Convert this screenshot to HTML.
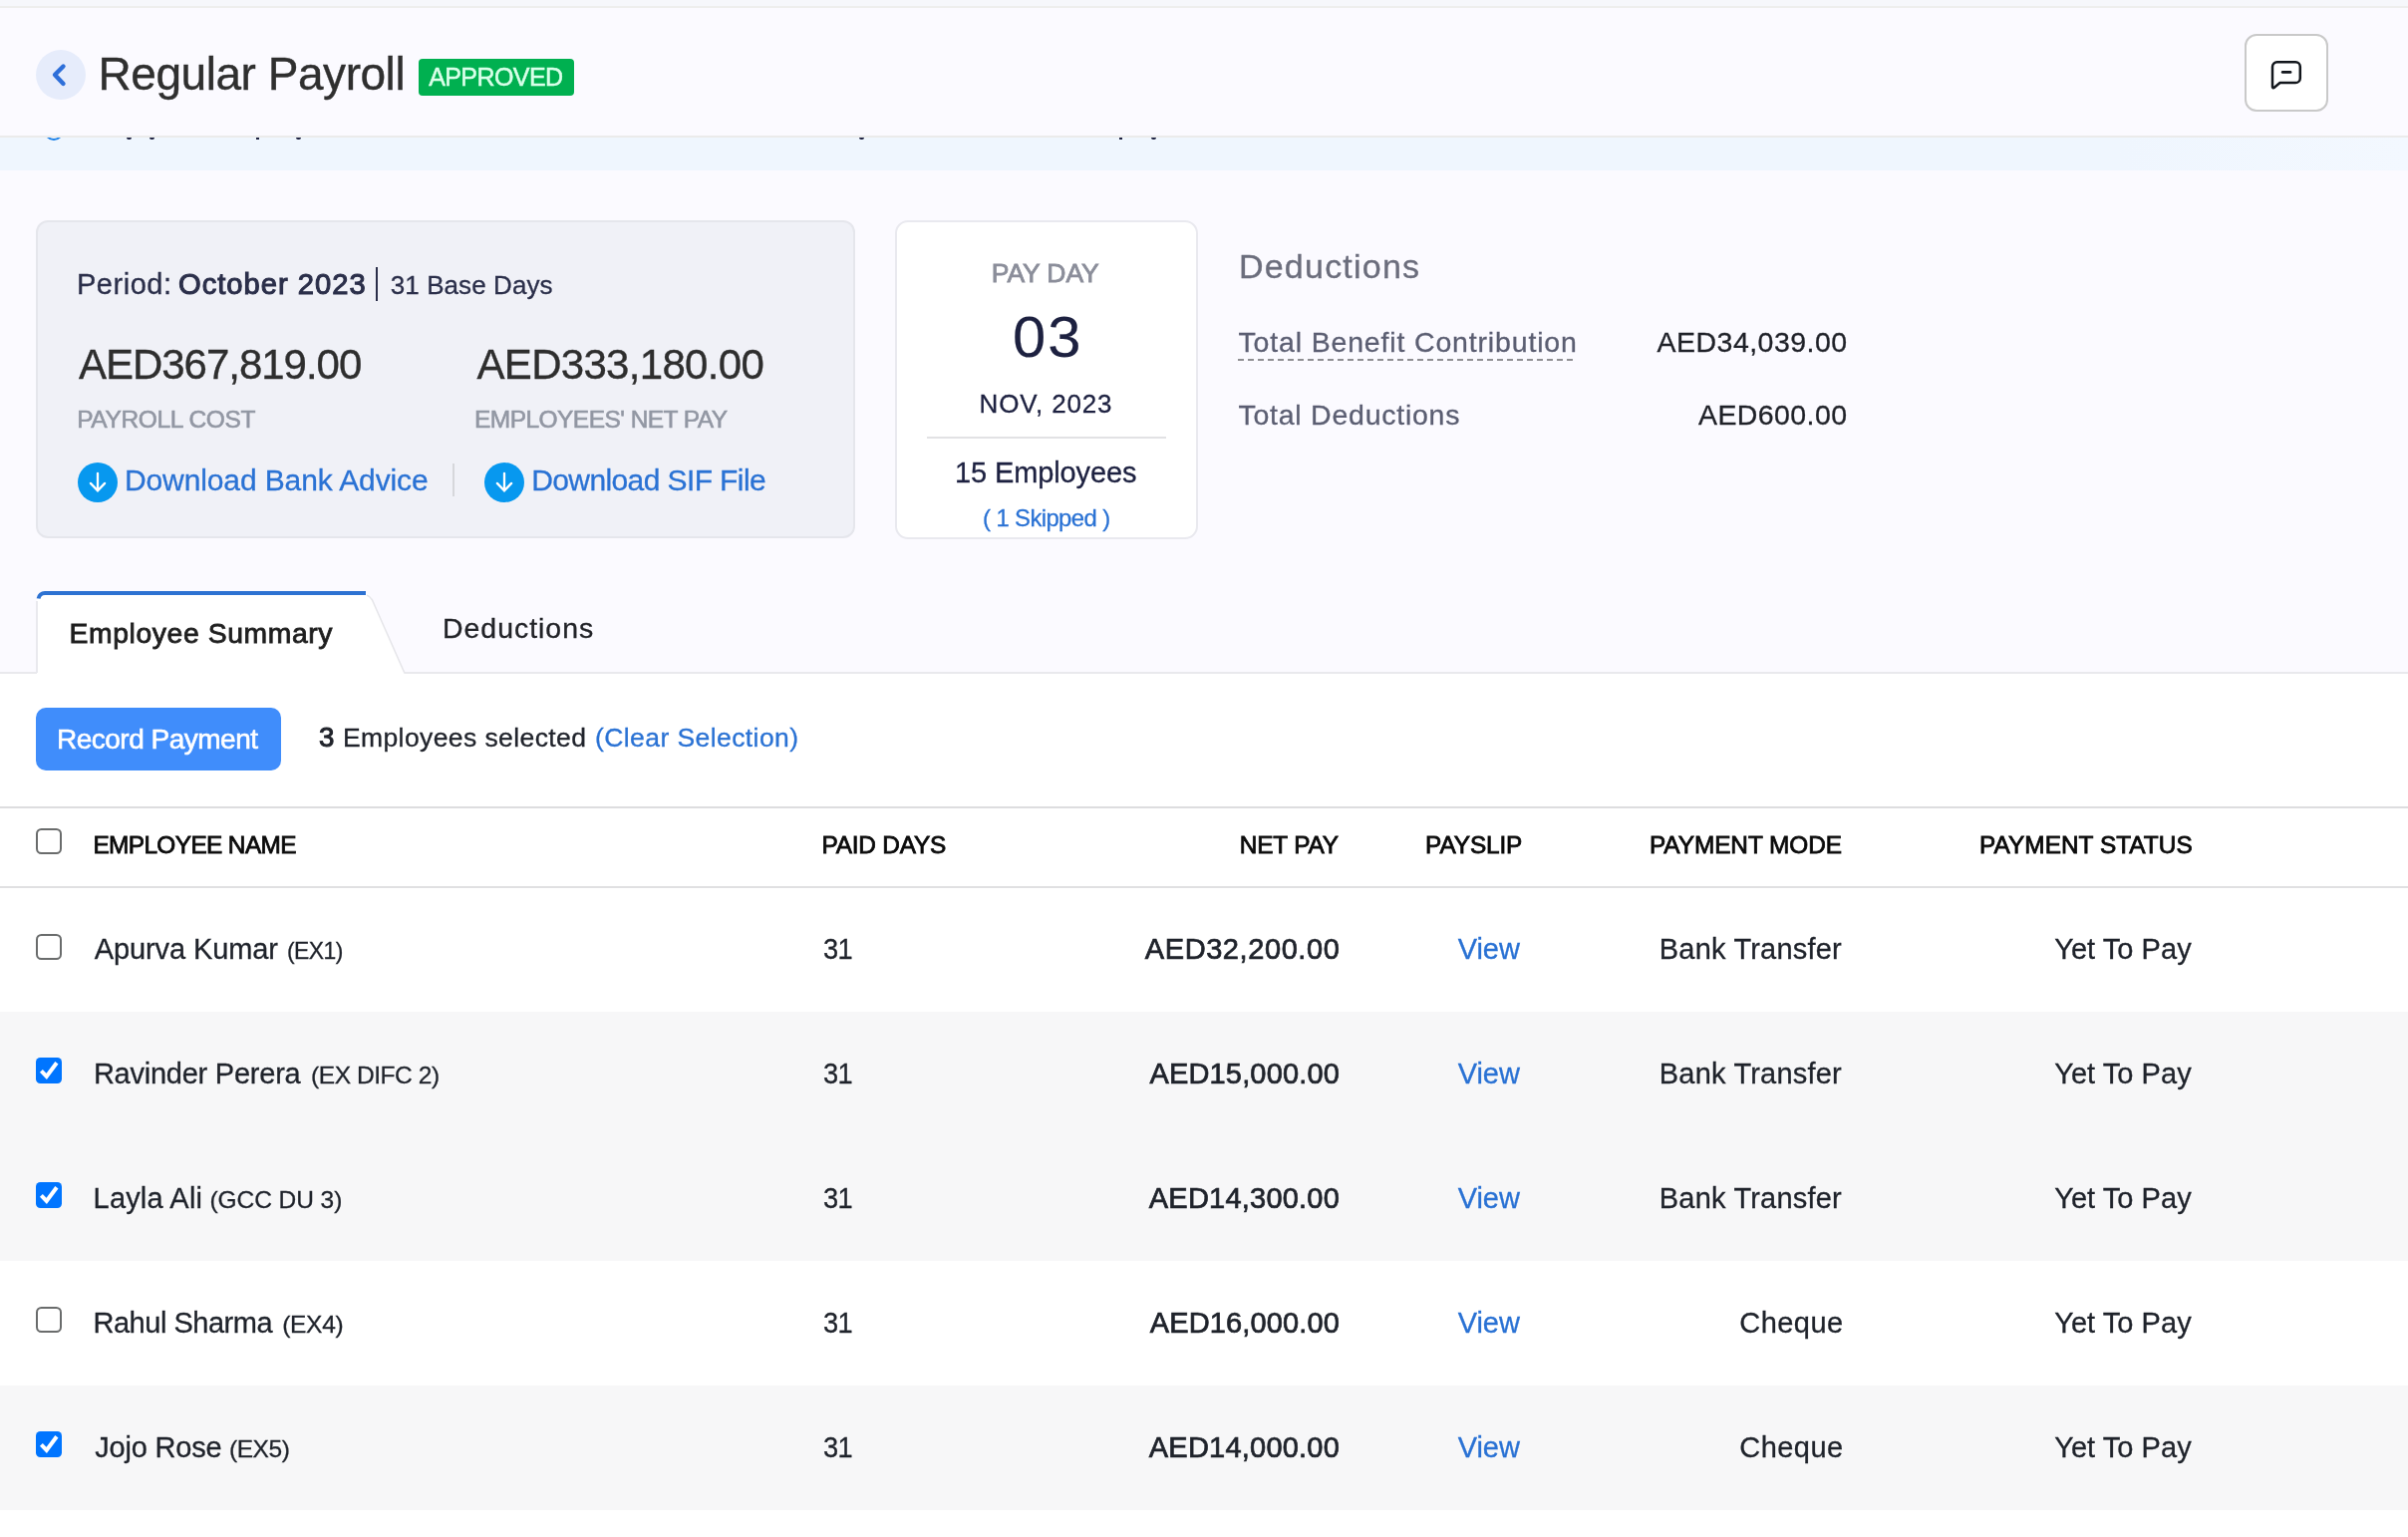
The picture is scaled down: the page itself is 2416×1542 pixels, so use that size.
<!DOCTYPE html>
<html><head><meta charset="utf-8"><title>Regular Payroll</title>
<style>
*{box-sizing:border-box;margin:0;padding:0}
html,body{width:2416px;height:1542px;overflow:hidden;background:#fbfaff;font-family:"Liberation Sans",sans-serif}
.abs,.t{position:absolute}
.t{white-space:nowrap;display:block}
</style></head>
<body>
<div id="root" style="position:absolute;left:0;top:0;width:2416px;height:1542px;will-change:transform">
<!-- top strip -->
<div class="abs" style="left:0;top:0;width:2416px;height:6px;background:#f6f7fb"></div>
<div class="abs" style="left:0;top:6px;width:2416px;height:2px;background:#eeeeed"></div>
<!-- header bottom border + banner -->
<div class="abs" style="left:0;top:136px;width:2416px;height:2px;background:#ebebeb"></div>
<div class="abs" style="left:0;top:138px;width:2416px;height:33px;background:linear-gradient(90deg,#eff6fe 0,#eff6fe 88%,#f3f8ff 100%)"></div>
<!-- banner clipped content -->
<div class="abs" style="left:0;top:138px;width:2416px;height:33px;overflow:hidden">
<div class="abs" style="left:44px;top:-17px;width:20px;height:20px;border-radius:50%;border:2.2px solid #1a7fe8"></div>
<div class="abs" style="left:127px;top:0;width:5px;height:2px;background:#1d2140;border-radius:0 0 2px 2px"></div>
<div class="abs" style="left:150px;top:0;width:5px;height:2px;background:#1d2140;border-radius:0 0 2px 2px"></div>
<div class="abs" style="left:257px;top:0;width:3px;height:2px;background:#1d2140"></div>
<div class="abs" style="left:297px;top:0;width:5px;height:2px;background:#1d2140;border-radius:0 0 2px 2px"></div>
<div class="abs" style="left:862px;top:0;width:5px;height:2px;background:#1d2140;border-radius:0 0 2px 2px"></div>
<div class="abs" style="left:1123px;top:0;width:3px;height:2px;background:#1d2140"></div>
<div class="abs" style="left:1155px;top:0;width:5px;height:2px;background:#1d2140;border-radius:0 0 2px 2px"></div>
</div>
<!-- back circle -->
<div class="abs" style="left:36px;top:50px;width:50px;height:50px;border-radius:50%;background:#e6ecfb"></div>
<svg class="abs" style="left:36px;top:50px" width="50" height="50" viewBox="0 0 50 50"><path d="M27.5 16.5 L19 25 L27.5 34" fill="none" stroke="#2e6fd9" stroke-width="4.4" stroke-linecap="round" stroke-linejoin="round"/></svg>
<!-- approved badge -->
<div class="abs" style="left:420px;top:59px;width:156px;height:37px;border-radius:4px;background:#00b050"></div>
<!-- comment button -->
<div class="abs" style="left:2252px;top:34px;width:84px;height:78px;border-radius:12px;background:#fff;border:2px solid #c9c9c9"></div>
<svg class="abs" style="left:2274px;top:56px" width="40" height="40" viewBox="0 0 40 40"><path d="M10.8 6.3 H29.2 a4.6 4.6 0 0 1 4.6 4.6 V22.4 a4.6 4.6 0 0 1 -4.6 4.6 H13.6 L7.6 32 a1 1 0 0 1 -1.6 -0.9 V10.9 a4.6 4.6 0 0 1 4.8 -4.6 Z" fill="none" stroke="#12161c" stroke-width="2.5" stroke-linejoin="round"/><path d="M16.2 16.4 H24" stroke="#12161c" stroke-width="2.8" stroke-linecap="round"/></svg>
<!-- summary card -->
<div class="abs" style="left:36px;top:221px;width:822px;height:319px;border-radius:12px;background:#f0f1f7;border:2px solid #e5e6ec"></div>
<div class="abs" style="left:376.8px;top:268px;width:2.6px;height:33.5px;background:#2b2f4a"></div>
<div class="abs" style="left:78px;top:464px;width:40px;height:40px;border-radius:50%;background:#0798ef"></div>
<svg class="abs" style="left:78px;top:464px" width="40" height="40" viewBox="0 0 40 40"><path d="M20 10.8 V28 M12.9 20.9 L20 28.3 L27.1 20.9" fill="none" stroke="#fff" stroke-width="2.3" stroke-linecap="round" stroke-linejoin="miter"/></svg>
<div class="abs" style="left:454px;top:465px;width:2px;height:33px;background:#d6d7db"></div>
<div class="abs" style="left:486px;top:464px;width:40px;height:40px;border-radius:50%;background:#0798ef"></div>
<svg class="abs" style="left:486px;top:464px" width="40" height="40" viewBox="0 0 40 40"><path d="M20 10.8 V28 M12.9 20.9 L20 28.3 L27.1 20.9" fill="none" stroke="#fff" stroke-width="2.3" stroke-linecap="round" stroke-linejoin="miter"/></svg>
<!-- pay day card -->
<div class="abs" style="left:898px;top:220.5px;width:304px;height:320px;border-radius:13px;background:#fff;border:2px solid #e9e9ef"></div>
<div class="abs" style="left:930px;top:438px;width:240px;height:2px;background:#e2e2e4"></div>
<!-- dashed underline -->
<svg class="abs" style="left:1242px;top:359px" width="340" height="4"><path d="M0 2 H340" stroke="#8f8f92" stroke-width="2" stroke-dasharray="6 4"/></svg>
<!-- tabs -->
<div class="abs" style="left:0;top:676px;width:2416px;height:866px;background:#fff"></div>
<div class="abs" style="left:0;top:674px;width:37px;height:2px;background:#e9e9ed"></div><div class="abs" style="left:405px;top:674px;width:2011px;height:2px;background:#e9e9ed"></div>
<svg class="abs" style="left:0;top:585px" width="460" height="95" viewBox="0 585 460 95">
  <path d="M37 676 V603 a8 8 0 0 1 8 -8 H366 q4.5 0 7 5.5 L405.5 676 Z" fill="#fff"/>
  <path d="M37 675 V603" fill="none" stroke="#e9e9ee" stroke-width="2"/>
  <path d="M368 597 q3.5 1.5 5.5 5 L405.8 675" fill="none" stroke="#e6e6ea" stroke-width="1.6"/>
  <path d="M38.6 600.5 a6.5 6.5 0 0 1 6.4 -5.5 H367" fill="none" stroke="#2d72d2" stroke-width="4"/>
</svg>
<!-- record payment -->
<div class="abs" style="left:36px;top:710px;width:246px;height:63px;border-radius:10px;background:#408dfb"></div>
<!-- table lines -->
<div class="abs" style="left:0;top:809px;width:2416px;height:2px;background:#dddddf"></div>
<div class="abs" style="left:0;top:889px;width:2416px;height:2px;background:#e0e0e2"></div>
<!-- selected rows -->
<div class="abs" style="left:0;top:1015px;width:2416px;height:250px;background:#f7f7f8"></div>
<div class="abs" style="left:0;top:1390px;width:2416px;height:125px;background:#f7f7f8"></div>
<!-- checkboxes -->
<div class="abs cb" style="left:36px;top:831px"></div>
<div class="abs cb" style="left:36px;top:937px"></div>
<div class="abs cb on" style="left:36px;top:1061px"><svg width="26" height="26" viewBox="0 0 26 26" style="display:block"><path d="M5.4 13.4 L10.7 18.9 L20.9 5.3" fill="none" stroke="#fff" stroke-width="4"/></svg></div>
<div class="abs cb on" style="left:36px;top:1186px"><svg width="26" height="26" viewBox="0 0 26 26" style="display:block"><path d="M5.4 13.4 L10.7 18.9 L20.9 5.3" fill="none" stroke="#fff" stroke-width="4"/></svg></div>
<div class="abs cb" style="left:36px;top:1311px"></div>
<div class="abs cb on" style="left:36px;top:1436px"><svg width="26" height="26" viewBox="0 0 26 26" style="display:block"><path d="M5.4 13.4 L10.7 18.9 L20.9 5.3" fill="none" stroke="#fff" stroke-width="4"/></svg></div>
<style>
.cb{width:26px;height:26px;border:2px solid #6a6c6c;border-radius:5.5px;background:#fff}
.cb.on{border:0;background:#0075ff;border-radius:4.5px}
</style>
<span class="t" style="left:98.50px;top:51.06px;font-size:46px;line-height:46px;font-weight:400;color:#2f2f2f;letter-spacing:-0.455px;-webkit-text-stroke:0.35px #2f2f2f">Regular Payroll</span>
<span class="t" style="left:430.20px;top:64.64px;font-size:25px;line-height:25px;font-weight:400;color:#d9ffe9;letter-spacing:-0.583px;-webkit-text-stroke:0.5px #d9ffe9">APPROVED</span>
<span class="t" style="left:77.00px;top:270.65px;font-size:29px;line-height:29px;font-weight:400;color:#2b2f4a;letter-spacing:0.528px;-webkit-text-stroke:0.3px #2b2f4a">Period:</span>
<span class="t" style="left:178.50px;top:270.65px;font-size:29px;line-height:29px;font-weight:400;color:#2b2f4a;letter-spacing:1.015px;-webkit-text-stroke:1.05px #2b2f4a;transform-origin:1.00px 0;transform:scaleX(1.0045)">October 2023</span>
<span class="t" style="left:391.80px;top:273.19px;font-size:26px;line-height:26px;font-weight:400;color:#2b2f4a;letter-spacing:0.075px;-webkit-text-stroke:0.3px #2b2f4a">31 Base Days</span>
<span class="t" style="left:79.00px;top:345.05px;font-size:42px;line-height:42px;font-weight:400;color:#2e2e2e;letter-spacing:-1.027px;-webkit-text-stroke:0.35px #2e2e2e">AED367,819.00</span>
<span class="t" style="left:478.50px;top:345.05px;font-size:42px;line-height:42px;font-weight:400;color:#2e2e2e;letter-spacing:-0.693px;-webkit-text-stroke:0.35px #2e2e2e">AED333,180.00</span>
<span class="t" style="left:77.20px;top:408.66px;font-size:24.5px;line-height:24.5px;font-weight:400;color:#9297a3;letter-spacing:-0.371px;-webkit-text-stroke:0.6px #9297a3">PAYROLL COST</span>
<span class="t" style="left:476.00px;top:408.66px;font-size:24.5px;line-height:24.5px;font-weight:400;color:#9297a3;letter-spacing:-0.543px;-webkit-text-stroke:0.6px #9297a3">EMPLOYEES&#x27; NET PAY</span>
<span class="t" style="left:125.00px;top:466.61px;font-size:30px;line-height:30px;font-weight:400;color:#2a72d4;letter-spacing:-0.114px;-webkit-text-stroke:0.3px #2a72d4">Download Bank Advice</span>
<span class="t" style="left:533.20px;top:466.61px;font-size:30px;line-height:30px;font-weight:400;color:#2a72d4;letter-spacing:-0.602px;-webkit-text-stroke:0.3px #2a72d4">Download SIF File</span>
<span class="t" style="left:994.80px;top:260.57px;font-size:26.5px;line-height:26.5px;font-weight:400;color:#8b8e9a;letter-spacing:-0.104px;-webkit-text-stroke:0.8px #8b8e9a">PAY DAY</span>
<span class="t" style="left:1015.60px;top:309.20px;font-size:58px;line-height:58px;font-weight:400;color:#1d2140;letter-spacing:2.030px;-webkit-text-stroke:0.15px #1d2140;transform-origin:2.00px 0;transform:scaleX(1.0307)">03</span>
<span class="t" style="left:982.60px;top:391.99px;font-size:26px;line-height:26px;font-weight:400;color:#1d2140;letter-spacing:0.826px;-webkit-text-stroke:0.3px #1d2140">NOV, 2023</span>
<span class="t" style="left:958.00px;top:459.75px;font-size:29px;line-height:29px;font-weight:400;color:#1d2140;letter-spacing:-0.116px;-webkit-text-stroke:0.3px #1d2140">15 Employees</span>
<span class="t" style="left:986.30px;top:508.28px;font-size:24px;line-height:24px;font-weight:400;color:#2a72d4;letter-spacing:-0.600px;-webkit-text-stroke:0.3px #2a72d4;transform-origin:1.00px 0;transform:scaleX(0.9938)">( 1 Skipped )</span>
<span class="t" style="left:1242.60px;top:250.77px;font-size:33px;line-height:33px;font-weight:400;color:#6b6d7c;letter-spacing:1.155px;-webkit-text-stroke:0.3px #6b6d7c;transform-origin:2.00px 0;transform:scaleX(1.0323)">Deductions</span>
<span class="t" style="left:1242.50px;top:328.87px;font-size:28.5px;line-height:28.5px;font-weight:400;color:#5b5e72;letter-spacing:0.836px;-webkit-text-stroke:0.3px #5b5e72">Total Benefit Contribution</span>
<span class="t" style="left:1662.60px;top:328.87px;font-size:28.5px;line-height:28.5px;font-weight:400;color:#1f2128;letter-spacing:0.460px;-webkit-text-stroke:0.3px #1f2128">AED34,039.00</span>
<span class="t" style="left:1242.50px;top:401.87px;font-size:28.5px;line-height:28.5px;font-weight:400;color:#5b5e72;letter-spacing:0.750px;-webkit-text-stroke:0.3px #5b5e72">Total Deductions</span>
<span class="t" style="left:1704.00px;top:401.87px;font-size:28.5px;line-height:28.5px;font-weight:400;color:#1f2128;letter-spacing:0.409px;-webkit-text-stroke:0.3px #1f2128">AED600.00</span>
<span class="t" style="left:69.50px;top:620.84px;font-size:28.3px;line-height:28.3px;font-weight:400;color:#1f1f1f;letter-spacing:0.612px;-webkit-text-stroke:0.85px #1f1f1f">Employee Summary</span>
<span class="t" style="left:444.30px;top:617.10px;font-size:28px;line-height:28px;font-weight:400;color:#222328;letter-spacing:0.980px;-webkit-text-stroke:0.3px #222328;transform-origin:2.00px 0;transform:scaleX(1.0157)">Deductions</span>
<span class="t" style="left:57.00px;top:727.80px;font-size:28px;line-height:28px;font-weight:400;color:#ffffff;letter-spacing:-0.505px;-webkit-text-stroke:0.6px #ffffff">Record Payment</span>
<span class="t" style="left:320.00px;top:725.92px;font-size:27.5px;line-height:27.5px;font-weight:400;color:#21242c;letter-spacing:0.097px;-webkit-text-stroke:1.0px #21242c;transform-origin:1.00px 0;transform:scaleX(1.0069)">3</span>
<span class="t" style="left:343.90px;top:726.57px;font-size:26.5px;line-height:26.5px;font-weight:400;color:#21242c;letter-spacing:0.405px;-webkit-text-stroke:0.3px #21242c">Employees selected</span>
<span class="t" style="left:597.00px;top:726.57px;font-size:26.5px;line-height:26.5px;font-weight:400;color:#2a72d4;letter-spacing:0.417px;-webkit-text-stroke:0.3px #2a72d4">(Clear Selection)</span>
<span class="t" style="left:93.40px;top:836.35px;font-size:24.4px;line-height:24.4px;font-weight:400;color:#0a0a0a;letter-spacing:-0.610px;-webkit-text-stroke:0.8px #0a0a0a">EMPLOYEE NAME</span>
<span class="t" style="left:824.40px;top:836.35px;font-size:24.4px;line-height:24.4px;font-weight:400;color:#0a0a0a;letter-spacing:-0.206px;-webkit-text-stroke:0.8px #0a0a0a">PAID DAYS</span>
<span class="t" style="left:1243.70px;top:836.35px;font-size:24.4px;line-height:24.4px;font-weight:400;color:#0a0a0a;letter-spacing:-0.141px;-webkit-text-stroke:0.8px #0a0a0a">NET PAY</span>
<span class="t" style="left:1430.10px;top:836.35px;font-size:24.4px;line-height:24.4px;font-weight:400;color:#0a0a0a;letter-spacing:-0.132px;-webkit-text-stroke:0.8px #0a0a0a">PAYSLIP</span>
<span class="t" style="left:1654.90px;top:836.35px;font-size:24.4px;line-height:24.4px;font-weight:400;color:#0a0a0a;letter-spacing:-0.066px;-webkit-text-stroke:0.8px #0a0a0a">PAYMENT MODE</span>
<span class="t" style="left:1986.00px;top:836.35px;font-size:24.4px;line-height:24.4px;font-weight:400;color:#0a0a0a;letter-spacing:0.035px;-webkit-text-stroke:0.8px #0a0a0a">PAYMENT STATUS</span>
<span class="t" style="left:94.70px;top:938.05px;font-size:29px;line-height:29px;font-weight:400;color:#1f232b;letter-spacing:-0.100px;-webkit-text-stroke:0.3px #1f232b">Apurva Kumar</span>
<span class="t" style="left:288.30px;top:941.86px;font-size:24.5px;line-height:24.5px;font-weight:400;color:#1f232b;letter-spacing:-0.613px;-webkit-text-stroke:0.3px #1f232b;transform-origin:1.00px 0;transform:scaleX(0.9340)">(EX1)</span>
<span class="t" style="left:826.30px;top:938.05px;font-size:29px;line-height:29px;font-weight:400;color:#1f232b;letter-spacing:-0.725px;-webkit-text-stroke:0.3px #1f232b;transform-origin:1.00px 0;transform:scaleX(0.9384)">31</span>
<span class="t" style="left:1148.80px;top:938.05px;font-size:29px;line-height:29px;font-weight:400;color:#1f232b;letter-spacing:0.579px;-webkit-text-stroke:0.72px #1f232b">AED32,200.00</span>
<span class="t" style="left:1462.80px;top:938.05px;font-size:29px;line-height:29px;font-weight:400;color:#2a72d4;letter-spacing:-0.100px;-webkit-text-stroke:0.3px #2a72d4">View</span>
<span class="t" style="left:1664.80px;top:938.05px;font-size:29px;line-height:29px;font-weight:400;color:#1f232b;letter-spacing:0.194px;-webkit-text-stroke:0.3px #1f232b">Bank Transfer</span>
<span class="t" style="left:2061.20px;top:938.05px;font-size:29px;line-height:29px;font-weight:400;color:#1f232b;letter-spacing:0.049px;-webkit-text-stroke:0.3px #1f232b">Yet To Pay</span>
<span class="t" style="left:93.90px;top:1063.05px;font-size:29px;line-height:29px;font-weight:400;color:#1f232b;letter-spacing:-0.238px;-webkit-text-stroke:0.3px #1f232b">Ravinder Perera</span>
<span class="t" style="left:312.10px;top:1066.86px;font-size:24.5px;line-height:24.5px;font-weight:400;color:#1f232b;letter-spacing:-0.445px;-webkit-text-stroke:0.3px #1f232b">(EX DIFC 2)</span>
<span class="t" style="left:826.30px;top:1063.05px;font-size:29px;line-height:29px;font-weight:400;color:#1f232b;letter-spacing:-0.725px;-webkit-text-stroke:0.3px #1f232b;transform-origin:1.00px 0;transform:scaleX(0.9384)">31</span>
<span class="t" style="left:1153.50px;top:1063.05px;font-size:29px;line-height:29px;font-weight:400;color:#1f232b;letter-spacing:0.152px;-webkit-text-stroke:0.72px #1f232b">AED15,000.00</span>
<span class="t" style="left:1462.80px;top:1063.05px;font-size:29px;line-height:29px;font-weight:400;color:#2a72d4;letter-spacing:-0.100px;-webkit-text-stroke:0.3px #2a72d4">View</span>
<span class="t" style="left:1664.80px;top:1063.05px;font-size:29px;line-height:29px;font-weight:400;color:#1f232b;letter-spacing:0.194px;-webkit-text-stroke:0.3px #1f232b">Bank Transfer</span>
<span class="t" style="left:2061.20px;top:1063.05px;font-size:29px;line-height:29px;font-weight:400;color:#1f232b;letter-spacing:0.049px;-webkit-text-stroke:0.3px #1f232b">Yet To Pay</span>
<span class="t" style="left:93.60px;top:1188.05px;font-size:29px;line-height:29px;font-weight:400;color:#1f232b;letter-spacing:0.166px;-webkit-text-stroke:0.3px #1f232b">Layla Ali</span>
<span class="t" style="left:210.40px;top:1191.86px;font-size:24.5px;line-height:24.5px;font-weight:400;color:#1f232b;letter-spacing:-0.048px;-webkit-text-stroke:0.3px #1f232b">(GCC DU 3)</span>
<span class="t" style="left:826.30px;top:1188.05px;font-size:29px;line-height:29px;font-weight:400;color:#1f232b;letter-spacing:-0.725px;-webkit-text-stroke:0.3px #1f232b;transform-origin:1.00px 0;transform:scaleX(0.9384)">31</span>
<span class="t" style="left:1152.80px;top:1188.05px;font-size:29px;line-height:29px;font-weight:400;color:#1f232b;letter-spacing:0.216px;-webkit-text-stroke:0.72px #1f232b">AED14,300.00</span>
<span class="t" style="left:1462.80px;top:1188.05px;font-size:29px;line-height:29px;font-weight:400;color:#2a72d4;letter-spacing:-0.100px;-webkit-text-stroke:0.3px #2a72d4">View</span>
<span class="t" style="left:1664.80px;top:1188.05px;font-size:29px;line-height:29px;font-weight:400;color:#1f232b;letter-spacing:0.194px;-webkit-text-stroke:0.3px #1f232b">Bank Transfer</span>
<span class="t" style="left:2061.20px;top:1188.05px;font-size:29px;line-height:29px;font-weight:400;color:#1f232b;letter-spacing:0.049px;-webkit-text-stroke:0.3px #1f232b">Yet To Pay</span>
<span class="t" style="left:93.50px;top:1313.05px;font-size:29px;line-height:29px;font-weight:400;color:#1f232b;letter-spacing:-0.486px;-webkit-text-stroke:0.3px #1f232b">Rahul Sharma</span>
<span class="t" style="left:283.20px;top:1316.86px;font-size:24.5px;line-height:24.5px;font-weight:400;color:#1f232b;letter-spacing:-0.295px;-webkit-text-stroke:0.3px #1f232b">(EX4)</span>
<span class="t" style="left:826.30px;top:1313.05px;font-size:29px;line-height:29px;font-weight:400;color:#1f232b;letter-spacing:-0.725px;-webkit-text-stroke:0.3px #1f232b;transform-origin:1.00px 0;transform:scaleX(0.9384)">31</span>
<span class="t" style="left:1153.80px;top:1313.05px;font-size:29px;line-height:29px;font-weight:400;color:#1f232b;letter-spacing:0.125px;-webkit-text-stroke:0.72px #1f232b">AED16,000.00</span>
<span class="t" style="left:1462.80px;top:1313.05px;font-size:29px;line-height:29px;font-weight:400;color:#2a72d4;letter-spacing:-0.100px;-webkit-text-stroke:0.3px #2a72d4">View</span>
<span class="t" style="left:1745.30px;top:1313.05px;font-size:29px;line-height:29px;font-weight:400;color:#1f232b;letter-spacing:0.447px;-webkit-text-stroke:0.3px #1f232b">Cheque</span>
<span class="t" style="left:2061.20px;top:1313.05px;font-size:29px;line-height:29px;font-weight:400;color:#1f232b;letter-spacing:0.049px;-webkit-text-stroke:0.3px #1f232b">Yet To Pay</span>
<span class="t" style="left:95.30px;top:1438.05px;font-size:29px;line-height:29px;font-weight:400;color:#1f232b;letter-spacing:-0.193px;-webkit-text-stroke:0.3px #1f232b">Jojo Rose</span>
<span class="t" style="left:230.00px;top:1441.86px;font-size:24.5px;line-height:24.5px;font-weight:400;color:#1f232b;letter-spacing:-0.445px;-webkit-text-stroke:0.3px #1f232b">(EX5)</span>
<span class="t" style="left:826.30px;top:1438.05px;font-size:29px;line-height:29px;font-weight:400;color:#1f232b;letter-spacing:-0.725px;-webkit-text-stroke:0.3px #1f232b;transform-origin:1.00px 0;transform:scaleX(0.9384)">31</span>
<span class="t" style="left:1152.80px;top:1438.05px;font-size:29px;line-height:29px;font-weight:400;color:#1f232b;letter-spacing:0.216px;-webkit-text-stroke:0.72px #1f232b">AED14,000.00</span>
<span class="t" style="left:1462.80px;top:1438.05px;font-size:29px;line-height:29px;font-weight:400;color:#2a72d4;letter-spacing:-0.100px;-webkit-text-stroke:0.3px #2a72d4">View</span>
<span class="t" style="left:1745.30px;top:1438.05px;font-size:29px;line-height:29px;font-weight:400;color:#1f232b;letter-spacing:0.447px;-webkit-text-stroke:0.3px #1f232b">Cheque</span>
<span class="t" style="left:2061.20px;top:1438.05px;font-size:29px;line-height:29px;font-weight:400;color:#1f232b;letter-spacing:0.049px;-webkit-text-stroke:0.3px #1f232b">Yet To Pay</span>
</div>
</body></html>
